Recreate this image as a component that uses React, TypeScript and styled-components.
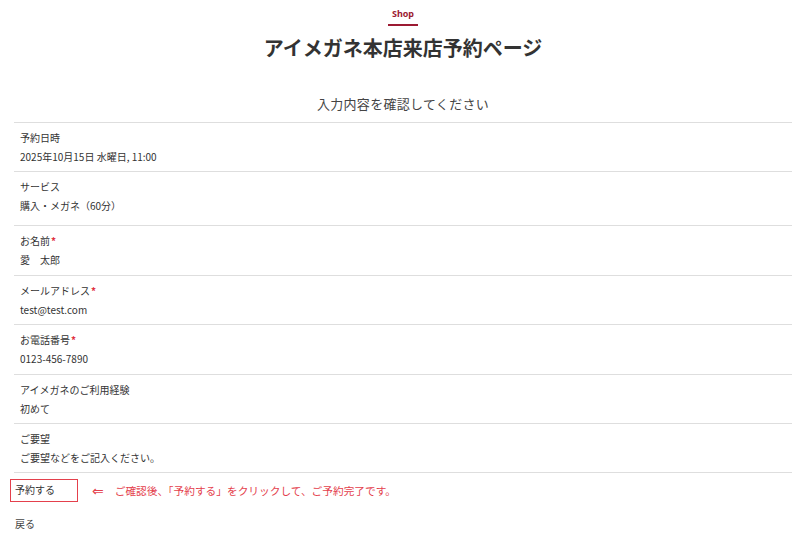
import React from 'react';
import styled, { createGlobalStyle } from 'styled-components';

const GlobalStyle = createGlobalStyle`
  html, body {
    margin: 0;
    padding: 0;
    background: #fff;
  }
  body {
    font-family: "Noto Sans CJK JP", "Noto Sans", sans-serif;
    color: #333;
  }
`;

type Item = { label: string; value: string; required?: boolean; tall?: boolean };

const items: Item[] = [
  { label: '予約日時', value: '2025年10月15日 水曜日, 11:00' },
  { label: 'サービス', value: '購入・メガネ（60分）', tall: true },
  { label: 'お名前', value: '愛　太郎', required: true },
  { label: 'メールアドレス', value: 'test@test.com', required: true },
  { label: 'お電話番号', value: '0123-456-7890', required: true },
  { label: 'アイメガネのご利用経験', value: '初めて' },
  { label: 'ご要望', value: 'ご要望などをご記入ください。' },
];

const App = () => {
  return (
    <>
      <GlobalStyle />
      <Page>
        <Header>
          <Shop>Shop</Shop>
          <Title>アイメガネ本店来店予約ページ</Title>
        </Header>
        <ConfirmTitle>入力内容を確認してください</ConfirmTitle>
        <List>
          {items.map((item) => (
            <Row key={item.label} $tall={item.tall}>
              <Label>
                {item.label}
                {item.required && <Required>*</Required>}
              </Label>
              <Value>{item.value}</Value>
            </Row>
          ))}
        </List>
        <Footer>
          <SubmitRow>
            <SubmitButton>予約する</SubmitButton>
            <Arrow>⇐</Arrow>
            <Note>ご確認後、「予約する」をクリックして、ご予約完了です。</Note>
          </SubmitRow>
          <BackLink>戻る</BackLink>
        </Footer>
      </Page>
    </>
  );
};

export default App;

const Page = styled.div`
  width: 778px;
  margin: 0 19px 0 14px;
  display: flex;
  flex-direction: column;
`;

const Header = styled.div`
  display: flex;
  flex-direction: column;
  align-items: center;
  padding-top: 7px;
`;

const Shop = styled.div`
  font-family: "Noto Sans", sans-serif;
  font-size: 9px;
  font-weight: 700;
  line-height: 14px;
  color: #9c1a32;
  padding-bottom: 3px;
  border-bottom: 2px solid #9c1a32;
  width: 30px;
  text-align: center;
`;

const Title = styled.h1`
  margin: 9px 0 0;
  font-size: 20px;
  font-weight: 700;
  line-height: 26px;
  letter-spacing: 0;
  color: #333;
`;

const ConfirmTitle = styled.h2`
  margin: 32px 0 0;
  font-size: 13px;
  font-weight: 400;
  line-height: 22px;
  letter-spacing: 0.3px;
  text-align: center;
  color: #444;
  padding-bottom: 7px;
  border-bottom: 1px solid #dedede;
`;

const List = styled.div`
  display: flex;
  flex-direction: column;
`;

const Row = styled.div<{ $tall?: boolean }>`
  display: flex;
  flex-direction: column;
  gap: 1px;
  padding: 6px 6px ${(p) => (p.$tall ? '10px' : '5.4px')};
  border-bottom: 1px solid #dedede;
`;

const Label = styled.div`
  font-size: 10px;
  line-height: 18px;
  color: #333;
`;

const Required = styled.span`
  color: #e0303f;
  font-weight: 700;
  margin-left: 1px;
`;

const Value = styled.div`
  font-size: 10px;
  line-height: 18px;
  color: #333;
`;

const Footer = styled.div`
  display: flex;
  flex-direction: column;
  padding-top: 6px;
`;

const SubmitRow = styled.div`
  display: flex;
  align-items: center;
  margin-left: -4px;
`;

const SubmitButton = styled.div`
  box-sizing: border-box;
  width: 68px;
  height: 23px;
  border: 1.5px solid #e4404c;
  padding-left: 4px;
  font-size: 10px;
  line-height: 20px;
  color: #333;
`;

const Arrow = styled.span`
  margin-left: 14px;
  font-family: "DejaVu Sans", sans-serif;
  font-size: 14px;
  color: #e4404c;
`;

const Note = styled.span`
  margin-left: 11px;
  font-size: 10.7px;
  color: #e4404c;
`;

const BackLink = styled.div`
  margin-top: 13px;
  padding-left: 1px;
  font-size: 10px;
  line-height: 18px;
  color: #444;
`;
